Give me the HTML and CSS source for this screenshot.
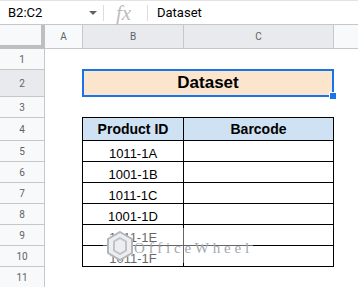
FILE: index.html
```html
<!DOCTYPE html>
<html>
<head>
<meta charset="utf-8">
<link rel="stylesheet" href="styles.css">
</head>
<body>
<div class="formula-bar">
  <div class="namebox"><span class="ref">B2:C2</span><span class="caret"></span></div>
  <div class="sep"></div>
  <div class="fx">fx</div>
  <div class="sep"></div>
  <div class="formula">Dataset</div>
</div>
<div class="sheet">
  <div class="row hrow">
    <div class="corner"></div>
    <div class="colhead">A</div>
    <div class="colhead sel">B</div>
    <div class="colhead sel">C</div>
    <div class="colhead"></div>
  </div>
  <div class="row h21"><div class="rowhead">1</div></div>
  <div class="row h27">
    <div class="rowhead sel">2</div>
    <div></div>
    <div class="merged">Dataset<span class="handle"></span></div>
  </div>
  <div class="row h21"><div class="rowhead">3</div></div>
  <div class="row h23">
    <div class="rowhead">4</div>
    <div></div>
    <div class="tcell first thead">Product ID</div>
    <div class="tcell thead">Barcode</div>
  </div>
  <div class="row h21">
    <div class="rowhead">5</div><div></div>
    <div class="tcell first">1011-1A</div><div class="tcell"></div>
  </div>
  <div class="row h21">
    <div class="rowhead">6</div><div></div>
    <div class="tcell first">1001-1B</div><div class="tcell"></div>
  </div>
  <div class="row h21">
    <div class="rowhead">7</div><div></div>
    <div class="tcell first">1011-1C</div><div class="tcell"></div>
  </div>
  <div class="row h21">
    <div class="rowhead">8</div><div></div>
    <div class="tcell first">1001-1D</div><div class="tcell"></div>
  </div>
  <div class="row h21">
    <div class="rowhead">9</div><div></div>
    <div class="tcell first">1011-1E</div><div class="tcell"></div>
  </div>
  <div class="row h21">
    <div class="rowhead">10</div><div></div>
    <div class="tcell first">1011-1F</div><div class="tcell"></div>
  </div>
  <div class="row h21"><div class="rowhead">11</div></div>
</div>
<div class="watermark">
  <svg class="logo" width="26" height="30" viewBox="0 0 26 30">
    <polygon points="13,1 25,8 25,22 13,29 1,22 1,8" fill="#eceef0" stroke="#b3b7bd" stroke-width="2"/>
    <polygon points="13,7 19,10.5 19,19.5 13,23 7,19.5 7,10.5" fill="none" stroke="#c0c4c9" stroke-width="2"/>
  </svg>
  <span class="wm-text">OfficeWheel</span>
</div>
</body>
</html>
```

FILE: styles.css
```css
html, body {
  margin: 0;
  padding: 0;
}
body {
  width: 358px;
  height: 287px;
  overflow: hidden;
  position: relative;
  background: #fff;
  font-family: Roboto, "Liberation Sans", Arial, sans-serif;
}

/* formula bar */
.formula-bar {
  display: flex;
  align-items: center;
  height: 25px;
  box-sizing: border-box;
  border-top: 1px solid #e3e3e3;
  border-bottom: 1px solid #c7c7c7;
  font-size: 13px;
  color: #000;
}
.namebox {
  width: 103px;
  box-sizing: border-box;
  display: flex;
  align-items: center;
  padding-left: 8px;
  padding-right: 6px;
}
.caret {
  margin-left: auto;
  width: 0;
  height: 0;
  border-left: 4px solid transparent;
  border-right: 4px solid transparent;
  border-top: 4px solid #5f6368;
  margin-top: 1px;
}
.sep {
  width: 1px;
  height: 16px;
  background: #dadce0;
}
.fx {
  width: 43px;
  box-sizing: border-box;
  padding-left: 12px;
  font-family: "Liberation Serif", "DejaVu Serif", serif;
  font-style: italic;
  font-size: 21px;
  line-height: 20px;
  color: #bdbdbd;
}
.formula {
  padding-left: 9px;
}

/* sheet grid */
.row {
  display: grid;
  grid-template-columns: 45px 38px 101px 150px 1fr;
}
.hrow { height: 24px; }
.h21 { height: 21px; }
.h23 { height: 23px; }
.h27 { height: 27px; }

.corner {
  background: #f8f9fa;
  border-right: 4px solid #bfbfbf;
  border-bottom: 4px solid #bfbfbf;
}
.colhead {
  background: #f8f9fa;
  border-right: 1px solid #c7c7c7;
  border-bottom: 1px solid #c7c7c7;
  display: flex;
  align-items: center;
  justify-content: center;
  font-size: 10px;
  color: #5f6368;
}
.colhead.sel { background: #e8eaed; }
.colhead:last-child { border-right: none; }

.rowhead {
  background: #f8f9fa;
  border-right: 1px solid #c7c7c7;
  border-bottom: 1px solid #c7c7c7;
  display: flex;
  align-items: center;
  justify-content: center;
  font-size: 10px;
  color: #5f6368;
}
.rowhead.sel { background: #e8eaed; }

.merged {
  grid-column: 3 / span 2;
  margin: -1px 0 0 -1px;
  border: 2px solid #1a73e8;
  background: #fce5cd;
  position: relative;
  display: flex;
  align-items: center;
  justify-content: center;
  font-family: "Liberation Sans", Arial, sans-serif;
  font-weight: bold;
  font-size: 17px;
  color: #000;
}
.handle {
  position: absolute;
  right: -5px;
  bottom: -5px;
  width: 6px;
  height: 6px;
  background: #1a73e8;
  border: 1px solid #fff;
}

.tcell {
  border-right: 1px solid #000;
  border-bottom: 1px solid #000;
  display: flex;
  align-items: flex-end;
  justify-content: center;
  font-family: "Liberation Sans", Arial, sans-serif;
  font-size: 13px;
  line-height: 15px;
  color: #000;
}
.tcell.first {
  border-left: 1px solid #000;
  margin-left: -1px;
}
.thead {
  border-top: 1px solid #000;
  margin-top: -1px;
  background: #cfe2f3;
  font-weight: bold;
  font-size: 14px;
  line-height: 16px;
  align-items: center;
}

/* watermark overlay */
.watermark {
  position: absolute;
  left: 103px;
  top: 228px;
  width: 150px;
  height: 35px;
  background: rgba(255, 255, 255, 0.4);
  display: flex;
  align-items: center;
  padding-left: 4px;
  box-sizing: border-box;
}
.logo { flex: none; }
.wm-text {
  margin-left: 1px;
  margin-top: 6px;
  font-family: "Liberation Serif", "DejaVu Serif", serif;
  font-size: 15px;
  letter-spacing: 3.8px;
  color: #a3a8af;
}
```
